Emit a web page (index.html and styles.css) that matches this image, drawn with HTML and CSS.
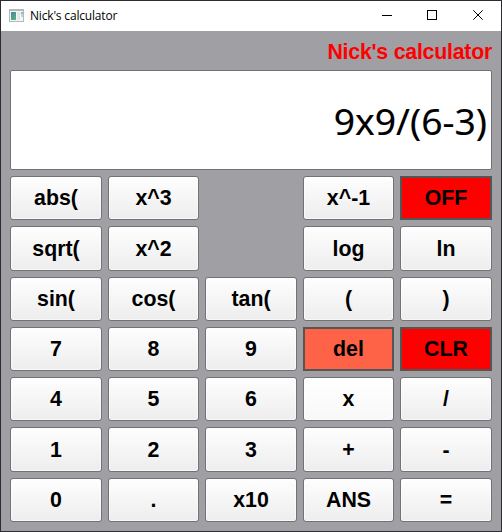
FILE: index.html
```html
<!DOCTYPE html>
<html lang="en">
<head>
<meta charset="utf-8">
<title>Nick's calculator</title>
<link rel="stylesheet" href="styles.css">
</head>
<body>
<div class="window">
  <header class="titlebar">
    <svg class="app-icon" width="15" height="13" viewBox="0 0 15 13" shape-rendering="crispEdges">
      <defs><linearGradient id="pane" x1="0" y1="0" x2="0.5" y2="1"><stop offset="0" stop-color="#4b83a8"/><stop offset="1" stop-color="#58ad80"/></linearGradient></defs>
      <rect width="15" height="13" fill="#b3b8bd"/>
      <rect x="1" y="2" width="13" height="10" fill="#f4f5f6"/>
      <rect x="2" y="3" width="5" height="8" fill="url(#pane)"/>
      <rect x="8" y="3" width="3" height="8" fill="#e4e6e8"/>
      <rect x="12" y="3" width="2" height="2" fill="#8fb5c9"/>
      <rect x="12" y="5" width="2" height="3" fill="#b9dfc0"/>
    </svg>
    <span class="caption">Nick's calculator</span>
    <svg class="controls" width="102" height="10" viewBox="0 0 102 10" fill="none" stroke="#000">
      <path d="M0 5.5h10M45.5 .5h9v9h-9z" shape-rendering="crispEdges"/>
      <path d="M91.3 .3l9.4 9.4M100.7 .3l-9.4 9.4"/>
    </svg>
  </header>
  <main class="panel">
    <h1 class="brand">Nick's calculator</h1>
    <div class="display"><span class="expression">9x9/(6-3)</span></div>
    <div class="keys">
      <button>abs(</button><button>x^3</button><span></span><button>x^-1</button><button class="flat red">OFF</button>
      <button>sqrt(</button><button>x^2</button><span></span><button>log</button><button>ln</button>
      <button>sin(</button><button>cos(</button><button>tan(</button><button>(</button><button>)</button>
      <button>7</button><button>8</button><button>9</button><button class="flat tomato">del</button><button class="flat red">CLR</button>
      <button>4</button><button>5</button><button>6</button><button class="hover">x</button><button>/</button>
      <button>1</button><button>2</button><button>3</button><button>+</button><button>-</button>
      <button>0</button><button>.</button><button>x10</button><button>ANS</button><button>=</button>
    </div>
  </main>
</div>
</body>
</html>
```
FILE: styles.css
```css
* { box-sizing: border-box; }
body { margin: 0; }
.window {
  width: 502px;
  height: 532px;
  border: 1px solid #2d2c32;
  background: #a09fa4;
  overflow: hidden;
}
.titlebar {
  display: flex;
  align-items: center;
  height: 30px;
  padding: 0 17px 0 8px;
  background: #fff;
}
.app-icon { margin-top: -2px; }
.caption {
  margin-left: 6px;
  font: 12px/16px "Open Sans", sans-serif;
  letter-spacing: -0.18px;
  color: #000;
}
.controls { margin-left: auto; margin-top: -2px; }
.panel { padding: 9px; }
.brand {
  margin: 0 0 6px;
  height: 24px;
  font: bold 21.33px/24px "Liberation Sans", Arial, sans-serif;
  letter-spacing: -0.24px;
  text-align: right;
  color: #f00;
}
.display {
  display: flex;
  align-items: center;
  justify-content: flex-end;
  height: 100px;
  margin-bottom: 6px;
  padding: 1px 4px 0 0;
  border: 1px solid #727175;
  border-radius: 2px;
  background: #fff;
}
.expression {
  font: 37.3px/44px "Noto Sans", Tahoma, sans-serif;
  -webkit-text-stroke: 0.15px #000;
  color: #000;
}
.keys {
  display: grid;
  grid-template-columns: 92px 91px 92px 91px 92px;
  grid-template-rows: 44px 45px 44px 44px 44px 45px 44px;
  gap: 6px;
}
button {
  margin: 0;
  padding: 0;
  border: 1px solid #727175;
  border-radius: 3px;
  background: linear-gradient(#fefefe, #ededed);
  box-shadow: inset 0 0 0 1px rgba(255, 255, 255, 0.6);
  font: bold 21.33px/24px "Liberation Sans", Arial, sans-serif;
  color: #000;
}
.hover { background: linear-gradient(#fff, #f8f8f8); }
.flat {
  border: 2px solid #555;
  border-radius: 0;
  box-shadow: none;
}
.red { background: #f00; }
.tomato { background: #ff6347; }
```
